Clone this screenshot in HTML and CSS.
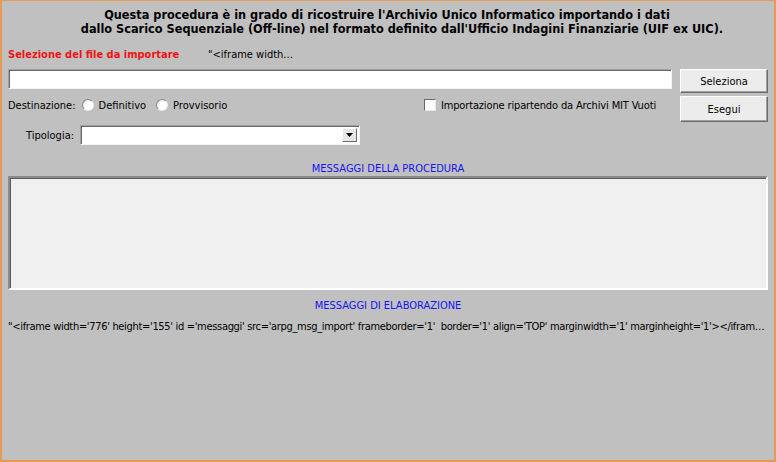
FILE: index.html
```html
<!DOCTYPE html>
<html lang="it">
<head>
<meta charset="utf-8">
<title>Importazione AUI</title>
<link rel="stylesheet" href="styles.css">
</head>
<body>
<div class="frame">
  <div class="header">
    <div class="line1">Questa procedura è in grado di ricostruire l'Archivio Unico Informatico importando i dati</div>
    <div class="line2">dallo Scarico Sequenziale (Off-line) nel formato definito dall'Ufficio Indagini Finanziarie (UIF ex UIC).</div>
  </div>
  <div class="selrow">
    <span class="sel-title">Selezione del file da importare</span>
    <span class="sel-note">"&lt;iframe width...</span>
  </div>
  <div class="main">
    <div class="left">
      <div class="textinput"></div>
      <div class="destrow">
        <span class="lbl">Destinazione:</span>
        <span class="radio"></span><span class="opt">Definitivo</span>
        <span class="radio r2"></span><span class="opt">Provvisorio</span>
        <span class="spacer"></span>
        <span class="check"></span><span class="opt opt-check">Importazione ripartendo da Archivi MIT Vuoti</span>
      </div>
      <div class="tiprow">
        <span class="lbl">Tipologia:</span>
        <div class="select">
          <span class="arrowbtn"><svg width="7" height="4" viewBox="0 0 7 4"><path d="M0 0H7L3.5 4Z" fill="#000"/></svg></span>
        </div>
      </div>
    </div>
    <div class="buttons">
      <div class="btn">Seleziona</div>
      <div class="btn">Esegui</div>
    </div>
  </div>
  <div class="caption cap1">MESSAGGI DELLA PROCEDURA</div>
  <div class="msgbox"></div>
  <div class="caption cap2">MESSAGGI DI ELABORAZIONE</div>
  <div class="iframe-text">"&lt;iframe width='776' height='155' id ='messaggi' src='arpg_msg_import' frameborder='1'&nbsp; border='1' align='TOP' marginwidth='1' marginheight='1'&gt;&lt;/iframe&gt;"</div>
</div>
</body>
</html>
```

FILE: styles.css
```css
html, body {
  margin: 0;
  padding: 0;
}
body {
  width: 776px;
  height: 462px;
  overflow: hidden;
  font-family: "DejaVu Sans Condensed", "DejaVu Sans", sans-serif;
  font-size: 11px;
  color: #000;
}
.frame {
  box-sizing: border-box;
  width: 776px;
  height: 462px;
  background: #c0c0c0;
  border-style: solid;
  border-color: #e69a52;
  border-width: 1px 2px 2px 2px;
  padding: 0 6px;
  display: flex;
  flex-direction: column;
}
.header {
  margin-top: 7px;
  font-weight: bold;
  font-size: 12.6px;
  line-height: 14px;
  text-align: center;
}
.line1 { padding-right: 2px; }
.line2 { padding-left: 28px; }
.selrow {
  margin-top: 12px;
  height: 14px;
  line-height: 14px;
  display: flex;
}
.sel-title {
  color: #f01414;
  font-weight: bold;
  width: 200px;
}
.sel-note {
  color: #000;
}
.main {
  margin-top: 7px;
  display: grid;
  grid-template-columns: 664px 88px;
  column-gap: 8px;
}
.textinput {
  box-sizing: border-box;
  height: 20px;
  background: #fff;
  border: 1px solid;
  border-color: #a0a0a0 #f4f4f4 #f4f4f4 #a0a0a0;
  box-shadow: inset 1px 1px 0 #696969;
}
.destrow {
  display: flex;
  align-items: center;
  height: 16px;
  margin-top: 8px;
}
.lbl { white-space: nowrap; }
.radio {
  box-sizing: border-box;
  width: 12px;
  height: 12px;
  border-radius: 50%;
  background: radial-gradient(circle at 60% 60%, #fff 0 40%, #e8e8e8 80%);
  border: 1px solid #9a9a9a;
  border-color: #8a8a8a #f0f0f0 #f0f0f0 #8a8a8a;
  margin-left: 6px;
  margin-right: 5px;
}
.r2 { margin-left: 10px; }
.spacer { flex: 1; }
.check {
  box-sizing: border-box;
  width: 12px;
  height: 12px;
  background: #fff;
  border: 1px solid;
  border-color: #6a6a6a #e8e8e8 #e8e8e8 #6a6a6a;
  margin-right: 5px;
}
.opt-check {
  letter-spacing: -0.14px;
  margin-right: 16px;
}
.tiprow {
  display: flex;
  align-items: center;
  margin-top: 12px;
  height: 20px;
}
.tiprow .lbl {
  width: 72px;
  padding-left: 18px;
  box-sizing: border-box;
}
.select {
  box-sizing: border-box;
  width: 280px;
  height: 20px;
  background: #fff;
  border: 1px solid;
  border-color: #a0a0a0 #f4f4f4 #f4f4f4 #a0a0a0;
  box-shadow: inset 1px 1px 0 #696969;
  display: flex;
  justify-content: flex-end;
  align-items: center;
  padding-right: 2px;
}
.arrowbtn {
  box-sizing: border-box;
  width: 15px;
  height: 14px;
  background: #e6e6e6;
  border: 1px solid;
  border-color: #fff #6a6a6a #6a6a6a #fff;
  display: flex;
  align-items: center;
  justify-content: center;
}
.buttons {
  display: flex;
  flex-direction: column;
  gap: 3px;
}
.btn {
  box-sizing: border-box;
  height: 24px;
  background: #ececec;
  border: 1px solid;
  border-color: #fff #6a6a6a #6a6a6a #fff;
  box-shadow: inset -1px -1px 0 #a0a0a0;
  display: flex;
  align-items: center;
  justify-content: center;
}
.btn + .btn { height: 26px; }
.caption {
  color: #1414f0;
  text-align: center;
  line-height: 13px;
}
.cap1 { margin-top: 17px; }
.msgbox {
  box-sizing: border-box;
  margin-top: 1px;
  height: 114px;
  background: #f0f0f0;
  border: 2px solid;
  border-color: #8a8a8a #fff #fff #8a8a8a;
  box-shadow: inset 1px 1px 0 #5a5a5a, 0 0 0 1px #c0c0c0;
}
.cap2 { margin-top: 9px; }
.iframe-text {
  margin-top: 8px;
  white-space: nowrap;
  overflow: hidden;
  text-overflow: ellipsis;
  width: 760px;
  line-height: 13px;
  letter-spacing: -0.32px;
}
```
